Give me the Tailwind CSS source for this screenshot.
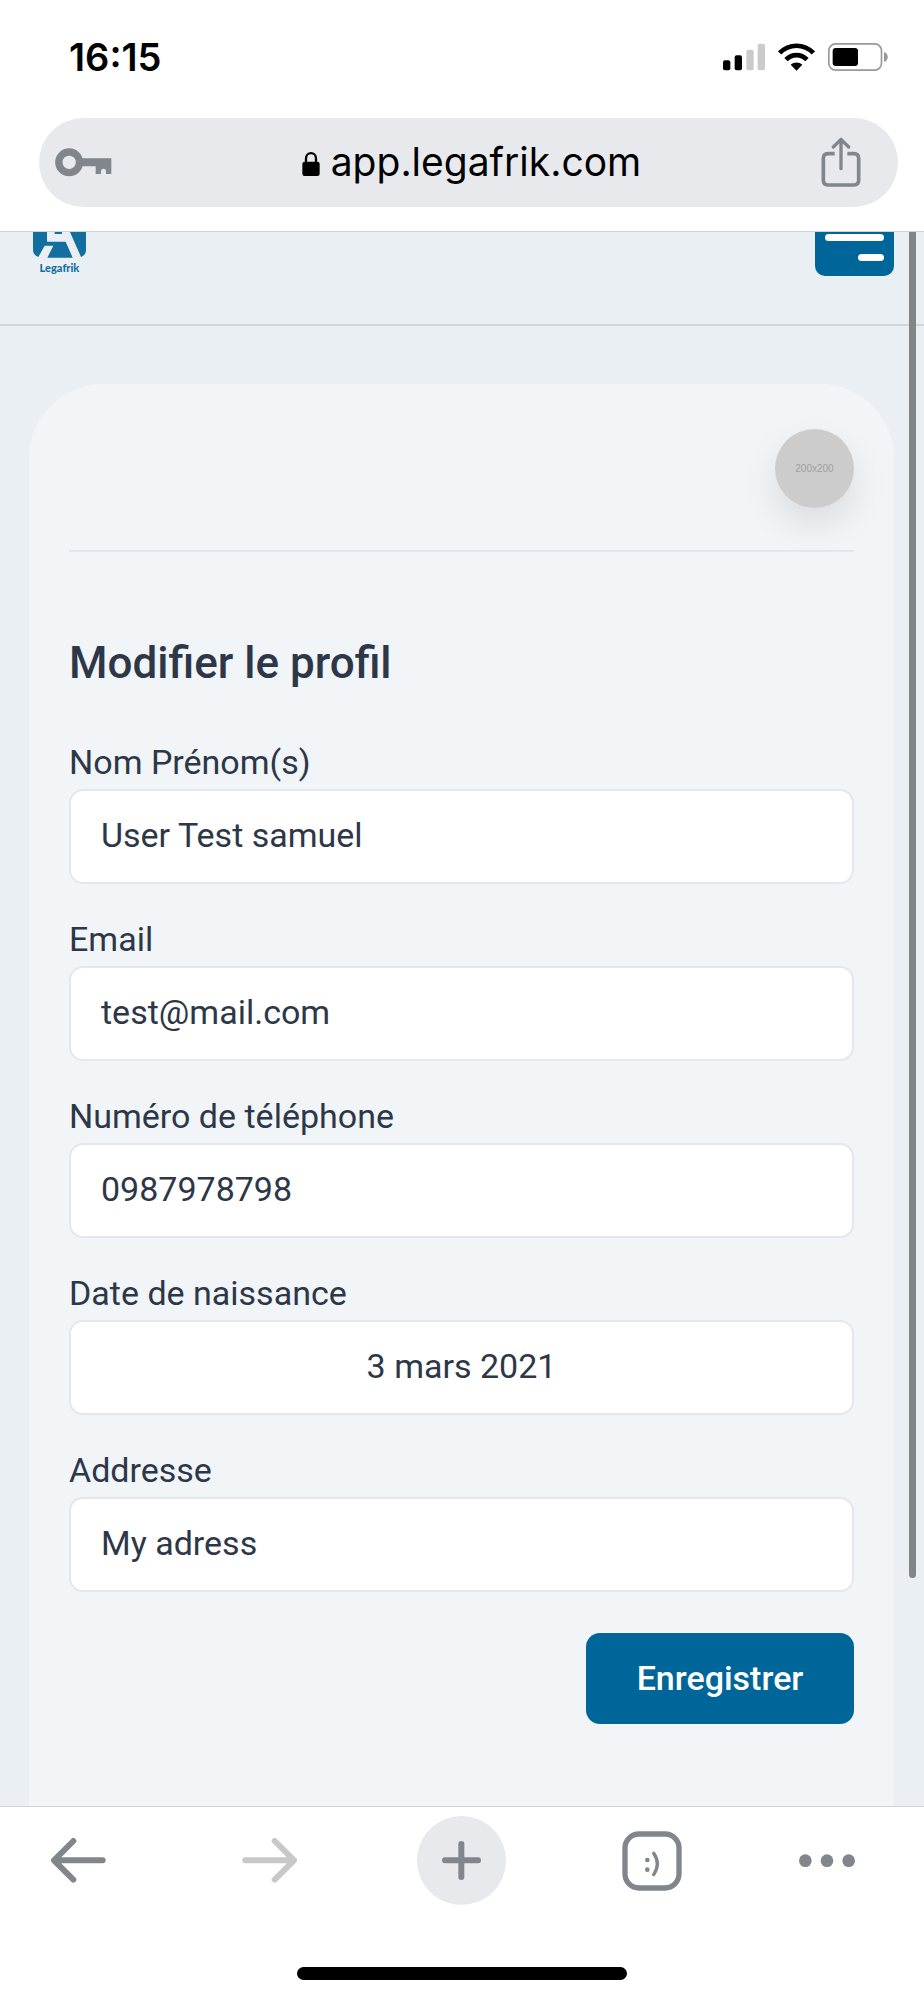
<!DOCTYPE html>
<html lang="fr">
 <head>
  <meta charset="UTF-8">
  <meta name="viewport" content="width=device-width, initial-scale=1.0">
  <title>Modifier le profil - Legafrik</title>
  <script src="https://cdn.jsdelivr.net/npm/@tailwindcss/browser@4"></script>
 </head>
 <body class="min-h-screen flex flex-col bg-white text-[#2d3748] font-[Roboto,sans-serif]">

  <!-- Phone status bar and address bar -->
  <div class="border-b border-[#cfd3d7] pb-6 text-black font-[Inter,sans-serif]">
   <div class="flex items-center justify-between h-[114px] pl-[69px] pr-9">
    <span class="text-[38px] leading-[44px] font-semibold">16:15</span>
    <div class="flex items-center gap-[13px]">
     <svg class="w-[42px] h-7" viewBox="0 0 126 84">
      <rect x="0" y="52" width="22" height="30" rx="6"/>
      <rect x="35" y="37" width="22" height="45" rx="6"/>
      <rect x="70" y="20" width="22" height="62" rx="6" fill="#cbcbcb"/>
      <rect x="104" y="2" width="22" height="80" rx="6" fill="#cbcbcb"/>
     </svg>
     <svg class="w-[37px] h-7" viewBox="0 0 111 84">
      <g fill="none" stroke="#000" stroke-width="14">
       <path d="M5 30C33 1 78 1 106 30"/>
       <path d="M24 50C42 32 69 32 87 50"/>
      </g>
      <path d="M55.500 83L38 65C48 56 63 56 73 65Z"/>
     </svg>
     <svg class="w-[60px] h-7" viewBox="0 0 180 84">
      <rect x="2.500" y="2.500" width="158" height="79" rx="20" fill="none" stroke="#999" stroke-width="5"/>
      <rect x="14" y="15" width="76" height="54" rx="9"/>
      <path d="M168 27C183 32 183 52 168 57Z" fill="#999"/>
     </svg>
    </div>
   </div>
   <div class="flex items-center justify-between mt-1 ml-[39px] mr-[26px] h-[89px] pl-4 pr-[37px] rounded-full bg-[#e8e9ed]">
    <button type="button" aria-label="Mots de passe" class="w-[67px]">
     <svg class="w-[57px] h-[29px]" viewBox="0 0 171 87">
      <circle cx="42.500" cy="43" r="31" fill="none" stroke="#80868b" stroke-width="22"/>
      <path d="M80 31H169V78H153V70C153 60 138 60 138 70V78H122V55H80Z" fill="#80868b"/>
     </svg>
    </button>
    <div class="flex items-center gap-[11px] pb-[2px] text-[39px] leading-[48px]">
     <svg class="w-[18px] h-6 mt-1" viewBox="0 0 54 72">
      <path d="M12 32V20C12 -2 42 -2 42 20V32" fill="none" stroke="#000" stroke-width="7"/>
      <rect x="1" y="29" width="52" height="43" rx="7"/>
     </svg>
     <span>app.legafrik.com</span>
    </div>
    <button type="button" aria-label="Partager">
     <svg class="w-10 h-[51px]" viewBox="0 0 120 153" fill="none" stroke="#80868b" stroke-width="11" stroke-linecap="round" stroke-linejoin="round">
      <path d="M60 95V8M37 30L60 7L83 30" stroke-width="10"/>
      <path d="M41 50H21Q7 50 7 64V130Q7 144 21 144H99Q113 144 113 130V64Q113 50 99 50H79" stroke-linecap="butt"/>
     </svg>
    </button>
   </div>
  </div>

  <!-- Web page, scrolled down a little -->
  <main class="relative flex-1 overflow-hidden bg-[#eaeff3]">
   <header class="flex items-start justify-between h-[94px] pl-[33px] pr-[30px] border-b-2 border-[#d0d6db]">
    <a href="#" class="flex flex-col items-center text-[#126fa0]">
     <svg class="w-[53px] h-[26px]" viewBox="0 0 159 78" fill="currentColor">
      <path d="M0 0H42V29H98L119 77H43L61 41H35L16 75Q0 68 0 54Z"/>
      <path d="M111 0H159V54Q159 68 144 75Z"/>
      <path d="M65 0H87V6H65Z"/>
     </svg>
     <span class="mt-[3px] text-[11px] leading-[14px] font-black font-[Lato,sans-serif]">Legafrik</span>
    </a>
    <button type="button" aria-label="Menu" class="flex flex-col items-end w-[79px] h-11 pt-[2px] pr-[10px] gap-[13px] rounded-b-[10px] bg-[#006699]">
     <span class="w-[59px] h-[7px] rounded-full bg-white"></span>
     <span class="w-[26px] h-[7px] rounded-full bg-white"></span>
    </button>
   </header>

   <section class="mt-[58px] ml-[29px] mr-[30px] px-10 pt-[45px] pb-[82px] rounded-t-[74px] bg-[#f1f5f8]">
    <div class="flex justify-end pb-[42px] border-b-2 border-[#dfe8ef]">
     <div class="flex items-center justify-center size-[79px] rounded-full bg-[#ccc] text-[#a0a0a0] text-[10px] leading-4 font-[Liberation_Sans,sans-serif] shadow-[0_16px_36px_rgba(0,0,0,0.1)]">200x200</div>
    </div>
    <h1 class="mt-[84px] mb-[45px] text-[44px] leading-[54px] font-medium">Modifier le profil</h1>
    <form class="flex flex-col gap-7 text-[34px]">
     <div>
      <label for="name" class="block leading-[54px]">Nom Prénom(s)</label>
      <input id="name" type="text" value="User Test samuel" class="block w-full h-[95px] px-[30px] pb-[3px] border-2 border-[#e2e8f0] rounded-[14px] bg-white">
     </div>
     <div>
      <label for="email" class="block leading-[54px]">Email</label>
      <input id="email" type="email" value="test@mail.com" class="block w-full h-[95px] px-[30px] pb-[3px] border-2 border-[#e2e8f0] rounded-[14px] bg-white">
     </div>
     <div>
      <label for="phone" class="block leading-[54px]">Numéro de téléphone</label>
      <input id="phone" type="tel" value="0987978798" class="block w-full h-[95px] px-[30px] pb-[3px] border-2 border-[#e2e8f0] rounded-[14px] bg-white">
     </div>
     <div>
      <label for="birthday" class="block leading-[54px]">Date de naissance</label>
      <input id="birthday" type="text" value="3 mars 2021" class="block w-full h-[95px] px-[30px] pb-[3px] border-2 border-[#e2e8f0] rounded-[14px] bg-white text-center">
     </div>
     <div>
      <label for="address" class="block leading-[54px]">Addresse</label>
      <input id="address" type="text" value="My adress" class="block w-full h-[95px] px-[30px] pb-[3px] border-2 border-[#e2e8f0] rounded-[14px] bg-white">
     </div>
     <button type="submit" class="self-end mt-[13px] w-[268px] h-[91px] rounded-[14px] bg-[#006699] text-white font-medium">Enregistrer</button>
    </form>
   </section>

   <!-- Scroll indicator -->
   <div class="absolute top-0 right-2 w-[7px] h-[1346px] rounded-b-full bg-[#838485]"></div>
  </main>

  <!-- Browser toolbar -->
  <footer class="border-t border-[#d0d4d8] pt-[9px] pb-5">
   <nav class="flex items-center justify-between pl-[34px] pr-[69px] text-[#80868b]">
    <button type="button" aria-label="Retour" class="flex items-center justify-center w-[89px] h-[89px]">
     <svg class="w-[55px] h-[45px]" viewBox="0 0 165 135" fill="none" stroke="currentColor" stroke-width="18" stroke-linecap="round" stroke-linejoin="round">
      <path d="M155 67H10M67 9L9 67L67 125"/>
     </svg>
    </button>
    <button type="button" aria-label="Avancer" class="flex items-center justify-center w-[89px] h-[89px] text-[#c8c8c8]">
     <svg class="w-[55px] h-[45px]" viewBox="0 0 165 135" fill="none" stroke="currentColor" stroke-width="18" stroke-linecap="round" stroke-linejoin="round">
      <path d="M10 67H155M98 9L156 67L98 125"/>
     </svg>
    </button>
    <button type="button" aria-label="Nouvel onglet" class="flex items-center justify-center w-[89px] h-[89px] rounded-full bg-[#e8e9ed]">
     <svg class="size-[39px]" viewBox="0 0 117 117" fill="none" stroke="currentColor" stroke-width="18" stroke-linecap="round">
      <path d="M9 58H108M58 9V108"/>
     </svg>
    </button>
    <button type="button" aria-label="Onglets" class="flex items-center justify-center w-[89px] h-[89px]">
     <svg class="size-[60px]" viewBox="0 0 180 180" fill="none" stroke="currentColor">
      <rect x="9" y="9" width="162" height="162" rx="42" stroke-width="16"/>
      <path d="M95 67Q117 98 95 131" stroke-width="10" stroke-linecap="round"/>
      <circle cx="76" cy="87" r="7" fill="currentColor" stroke="none"/>
      <circle cx="76" cy="116" r="7" fill="currentColor" stroke="none"/>
     </svg>
    </button>
    <button type="button" aria-label="Plus">
     <svg class="w-14 h-[13px]" viewBox="0 0 168 39" fill="currentColor">
      <circle cx="19" cy="20" r="19"/>
      <circle cx="84" cy="20" r="19"/>
      <circle cx="149" cy="20" r="19"/>
     </svg>
    </button>
   </nav>
   <div class="w-[330px] h-[13px] mt-[62px] mx-auto rounded-full bg-black"></div>
  </footer>
 </body>
</html>
